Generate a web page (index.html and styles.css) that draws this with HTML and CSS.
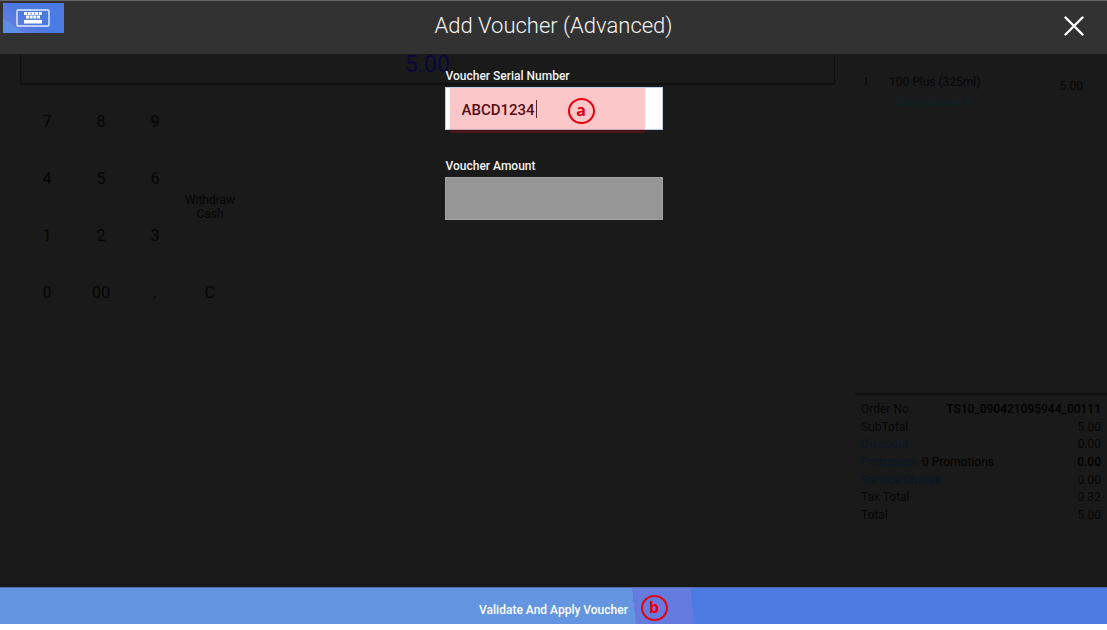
FILE: index.html
```html
<!DOCTYPE html>
<html lang="en">
  <head>
    <meta charset="UTF-8" />
    <meta name="viewport" content="width=device-width, initial-scale=1.0" />
    <title>Add Voucher (Advanced)</title>
    <link rel="stylesheet" href="styles.css">
  </head>
  <body>
    <div class="screen">
      <!-- Payment page behind the dialog -->
      <div class="pos" inert>
        <main class="payment">
          <div class="amount">5.00</div>
          <div class="keypad">
            <button>7</button>
            <button>8</button>
            <button>9</button>
            <button class="withdraw">Withdraw Cash</button>
            <button>4</button>
            <button>5</button>
            <button>6</button>
            <button>1</button>
            <button>2</button>
            <button>3</button>
            <button>0</button>
            <button>00</button>
            <button>.</button>
            <button>C</button>
          </div>
        </main>
        <aside class="order">
          <div class="items">
            <div class="item">
              <span class="qty">1</span>
              <div class="item-name">
                <div>100 Plus (325ml)</div>
                <div class="item-note">Tax Inclusive A</div>
              </div>
              <span class="price">5.00</span>
            </div>
          </div>
          <table class="totals">
            <tr><th>Order No.</th><td colspan="2" class="strong">TS10_090421095944_00111</td></tr>
            <tr><th>SubTotal</th><td colspan="2">5.00</td></tr>
            <tr><th><a href="#">Discount</a></th><td colspan="2">0.00</td></tr>
            <tr><th><a href="#">Promotion</a></th><td class="promo">0 Promotions</td><td class="strong">0.00</td></tr>
            <tr><th colspan="2"><a href="#">Service Charge</a></th><td>0.00</td></tr>
            <tr><th>Tax Total</th><td colspan="2">0.32</td></tr>
            <tr><th>Total</th><td colspan="2">5.00</td></tr>
          </table>
        </aside>
      </div>

      <!-- Voucher dialog -->
      <div class="dialog" role="dialog" aria-labelledby="title">
        <header class="dialog-header">
          <button class="keyboard" aria-label="Keyboard">
            <svg width="34" height="18" viewBox="0 0 34 18">
              <rect x="1" y="1" width="32" height="16" rx="1" fill="none" stroke="#e4edff" stroke-width="1.4" />
              <path d="M8 4.5h18M10 8h14" stroke="#fff" stroke-width="3" stroke-dasharray="3 0.7" />
              <path d="M8 12.7h18" stroke="#fff" stroke-width="3.6" />
            </svg>
          </button>
          <h1 id="title">Add Voucher (Advanced)</h1>
          <button class="close" aria-label="Close">
            <svg width="20" height="20" viewBox="0 0 20 20">
              <path d="M1.5 1.5l17 17M18.5 1.5l-17 17" stroke="#fff" stroke-width="2.4" stroke-linecap="round" />
            </svg>
          </button>
        </header>

        <form class="voucher-form" id="voucher">
          <label for="serial">Voucher Serial Number</label>
          <div class="field">
            <input type="text" id="serial" value="ABCD1234" />
            <span class="caret"></span>
            <span class="highlight"></span>
            <span class="marker marker-a">a</span>
          </div>
          <label for="amount">Voucher Amount</label>
          <div class="field">
            <input type="text" id="amount" disabled />
          </div>
        </form>

        <footer class="dialog-footer">
          <button class="apply" type="submit" form="voucher">Validate And Apply Voucher</button>
          <span class="marker marker-b">b</span>
        </footer>
      </div>
    </div>
  </body>
</html>
```

FILE: styles.css
```css
* {
  box-sizing: border-box;
}

body {
  margin: 0;
  background-color: #fff;
  font-family: Roboto, sans-serif;
  font-size: 12px;
}

button,
input {
  font-family: inherit;
  border: none;
  border-radius: 0;
  padding: 0;
}

button {
  cursor: pointer;
}

.screen {
  position: relative;
  height: calc(100vh - 6px);
  background-color: #1a1a1a;
}

/* payment page */
.pos {
  display: grid;
  grid-template-columns: 1fr 252px;
  gap: 20px;
  height: 100%;
  padding: 44px 0 98px 20px;
  color: #060606;
}

.amount {
  height: 41px;
  border: 1px solid #0f0f0f;
  border-bottom-width: 2px;
  border-radius: 2px;
  text-align: center;
  font-size: 23px;
  line-height: 40px;
  color: #0b0738;
}

.keypad {
  display: grid;
  grid-template-columns: repeat(3, 54px) 56px;
  grid-auto-rows: 57px;
  margin-top: 8px;
}

.keypad button {
  background: none;
  color: #050505;
  font-size: 16px;
  font-weight: 400;
}

.keypad .withdraw {
  grid-column: 4;
  grid-row: 1 / 4;
  padding-top: 57px;
  font-size: 12px;
}

.order {
  display: flex;
  flex-direction: column;
}

.items {
  flex: 1;
  padding: 30px 24px 0 8px;
}

.item {
  display: flex;
  line-height: 16px;
}

.qty {
  width: 26px;
  font-size: 10px;
  font-weight: 500;
}

.item-name {
  flex: 1;
}

.item-note {
  padding: 4px 0 0 4px;
  color: #102224;
}

.price {
  padding-top: 4px;
}

.totals {
  height: 133px;
  padding: 5px 6px 2px 6px;
  border-top: 2px solid #0f0f0f;
  border-spacing: 0;
}

.totals th,
.totals td {
  padding: 0;
  line-height: 14px;
  font-weight: 400;
  text-align: left;
  white-space: nowrap;
}

.totals th:not([colspan]) {
  width: 61px;
}

.totals td {
  text-align: right;
}

.totals .strong,
.totals .promo {
  color: #000;
  font-weight: 500;
}

.totals .promo {
  text-align: left;
  font-weight: 400;
}

.totals a {
  color: #0d1626;
  text-decoration: none;
}

/* dialog */
.dialog {
  position: absolute;
  inset: 0;
  display: flex;
  flex-direction: column;
}

.dialog-header {
  display: grid;
  grid-template-columns: 1fr auto 1fr;
  align-items: start;
  height: 54px;
  border-top: 1px solid #666;
  background-color: #323232;
}

.dialog-header h1 {
  margin: 0;
  color: #f4f4f4;
  font-size: 22px;
  font-weight: 300;
  line-height: 50px;
}

.keyboard {
  display: flex;
  align-items: center;
  justify-content: center;
  width: 61px;
  height: 30px;
  margin: 2px 3px;
  padding-right: 2px;
  background: linear-gradient(35deg, #5d90e4 20%, #5f7de0 20%, #5078e0 45%, #4a7be2 45%);
}

.close {
  display: flex;
  justify-self: end;
  padding: 15px 23px;
  background: none;
}

.voucher-form {
  flex: 1;
  width: 218px;
  margin: 0 auto;
  padding-top: 11px;
}

.voucher-form label {
  display: block;
  padding-left: 1px;
  color: #f2f2f2;
  font-weight: 500;
  line-height: 22px;
}

.field {
  position: relative;
  height: 43px;
  margin-bottom: 25px;
}

.field input {
  width: 100%;
  height: 100%;
  padding: 2px 16px 0;
  border: 1px solid #b9cdee;
  outline: none;
  background-color: #fff;
  color: #2b1216;
  caret-color: transparent;
  font-size: 15px;
  font-weight: 500;
}

.field input:disabled {
  border-color: #a3a3a3;
  background-color: #969696;
}

.caret {
  position: absolute;
  top: 13px;
  left: 91px;
  width: 1px;
  height: 18px;
  background-color: #333;
}

.dialog-footer {
  position: relative;
  height: 37px;
}

.apply {
  width: 100%;
  height: 100%;
  padding-top: 8px;
  border-top: 1px solid #4d6ca5;
  background: linear-gradient(
    84deg,
    #6495e1 calc(50% + 80px),
    #657bdd calc(50% + 80px),
    #657bdd calc(50% + 138px),
    #4c7be2 calc(50% + 138px)
  );
  color: #fff;
  font-size: 12px;
  font-weight: 500;
}

/* callouts */
.highlight {
  position: absolute;
  top: 1px;
  left: 5px;
  right: 18px;
  bottom: -3px;
  background-color: rgba(238, 0, 10, 0.22);
  pointer-events: none;
}

.marker {
  position: absolute;
  width: 27px;
  height: 26px;
  border: 2px solid #e8000b;
  border-radius: 50%;
  color: #e8000b;
  font-family: "Open Sans", sans-serif;
  font-size: 16px;
  font-weight: 700;
  line-height: 21px;
  text-align: center;
  pointer-events: none;
}

.marker-a {
  top: 11px;
  left: 123px;
}

.marker-b {
  top: 8px;
  left: calc(50% + 87px);
}
```
